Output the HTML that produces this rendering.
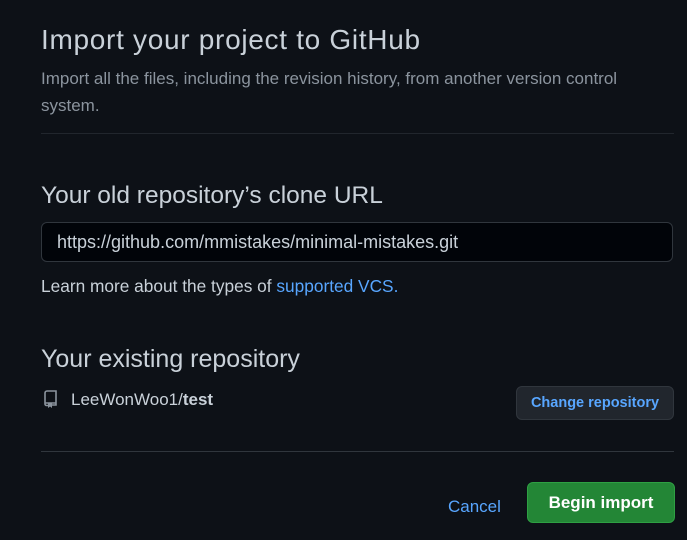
<!DOCTYPE html>
<html><head><style>
body{margin:0;width:687px;height:540px;background:#0d1117;font-family:"Liberation Sans",sans-serif;color:#c9d1d9;position:relative;overflow:hidden}
.a{position:absolute;white-space:nowrap}
</style></head><body>
<div class="a" style="left:41px;top:24px;font-size:28px;letter-spacing:0.7px;color:#c9d1d9">Import your project to GitHub</div>
<div class="a" style="left:41px;top:65px;font-size:17px;color:#8b949e;line-height:27px;white-space:normal;width:610px">Import all the files, including the revision history, from another version control system.</div>
<div class="a" style="left:41px;top:133px;width:633px;height:1px;background:#21262d"></div>
<div class="a" style="left:41px;top:182px;font-size:24.5px">Your old repository’s clone URL</div>
<div class="a" style="left:41px;top:222px;width:630px;height:38px;border:1px solid #30363d;border-radius:6px;background:#010409"></div>
<div class="a" style="left:57px;top:232px;font-size:18px">https://github.com/mmistakes/minimal-mistakes.git</div>
<div class="a" style="left:41px;top:276px;font-size:17.3px">Learn more about the types of <span style="color:#58a6ff">supported VCS.</span></div>
<div class="a" style="left:41px;top:345px;font-size:25px">Your existing repository</div>
<svg class="a" style="left:43px;top:390px" width="16" height="18" viewBox="0 0 16 18"><path d="M2 3a2 2 0 0 1 2-2h9v14H9M2 3v11a1.5 1.5 0 0 0 1.5 1.5H5M2 13h11" fill="none" stroke="#8b949e" stroke-width="1.6"/><path d="M5 13h4v5l-2-1.5L5 18z" fill="#8b949e"/></svg>
<div class="a" style="left:71px;top:390px;font-size:17px">LeeWonWoo1/<b>test</b></div>
<div class="a" style="left:516px;top:386px;width:156px;height:32px;border:1px solid #30363d;border-radius:6px;background:#21262d;color:#58a6ff;font-size:14.5px;font-weight:bold;text-align:center;line-height:32px">Change repository</div>
<div class="a" style="left:41px;top:451px;width:633px;height:1px;background:#30363d"></div>
<div class="a" style="left:448px;top:497px;font-size:17px;color:#58a6ff">Cancel</div>
<div class="a" style="left:527px;top:482px;width:146px;height:39px;border:1px solid #2ea043;border-radius:6px;background:#238636;color:#fff;font-size:17px;font-weight:bold;text-align:center;line-height:40px">Begin import</div>
</body></html>
